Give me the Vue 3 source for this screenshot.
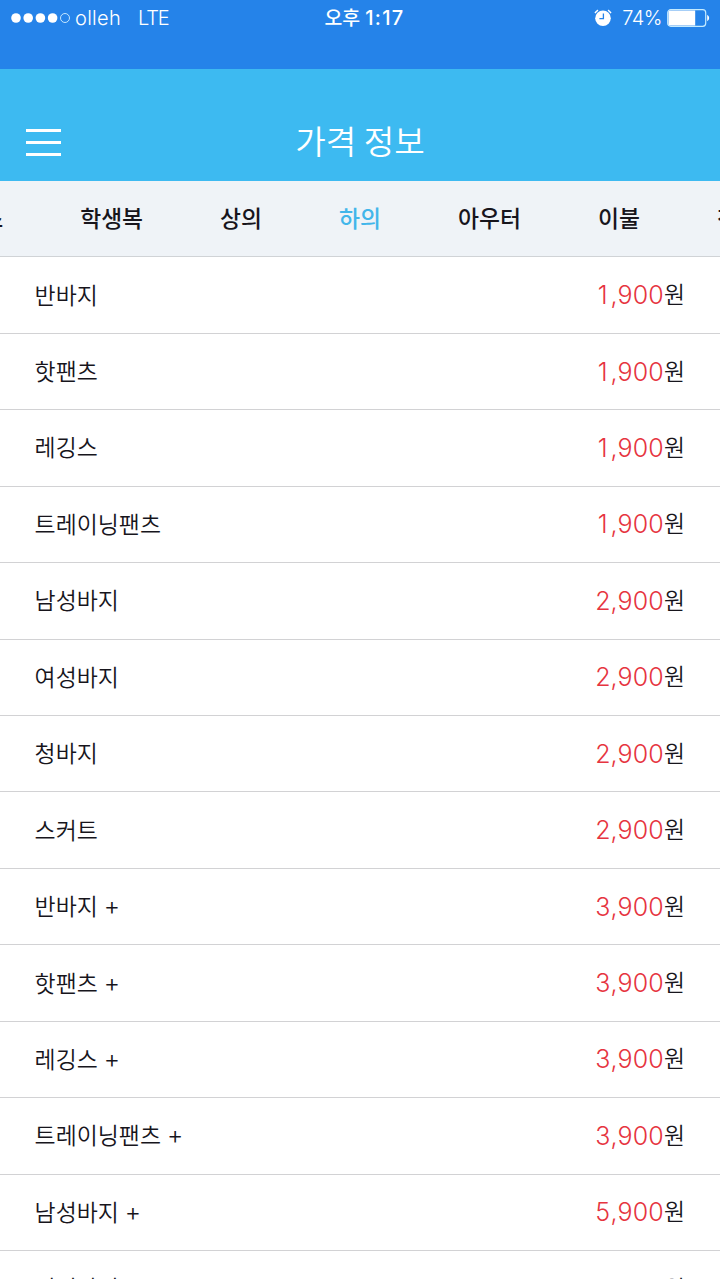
<script setup>
const tabs = ['원피스', '학생복', '상의', '하의', '아우터', '이불', '침구류']
const active = '하의'
const items = [
  ['반바지', '', '1,900'],
  ['핫팬츠', '', '1,900'],
  ['레깅스', '', '1,900'],
  ['트레이닝팬츠', '', '1,900'],
  ['남성바지', '', '2,900'],
  ['여성바지', '', '2,900'],
  ['청바지', '', '2,900'],
  ['스커트', '', '2,900'],
  ['반바지', '+', '3,900'],
  ['핫팬츠', '+', '3,900'],
  ['레깅스', '+', '3,900'],
  ['트레이닝팬츠', '+', '3,900'],
  ['남성바지', '+', '5,900'],
  ['여성바지', '+', '5,900'],
]
</script>

<template>
  <div class="screen">
    <div class="status">
      <div class="side">
        <svg class="signal" width="60" height="12" viewBox="0 0 60 12">
          <g fill="#fff">
            <circle cx="5" cy="6" r="4.8" />
            <circle cx="17.2" cy="6" r="4.8" />
            <circle cx="29.4" cy="6" r="4.8" />
            <circle cx="41.6" cy="6" r="4.8" />
          </g>
          <circle cx="54" cy="6" r="4.5" fill="none" stroke="#d5f0ff" stroke-width="0.9" />
        </svg>
        <span class="carrier">olleh</span>
        <span class="network">LTE</span>
      </div>
      <div class="time"><span class="ampm">오후</span><span class="clock">1:17</span></div>
      <div class="side right">
        <svg class="alarm" width="18" height="18" viewBox="0 0 18 18">
          <circle cx="9" cy="9.2" r="7.8" fill="#fff" />
          <path d="M1 4.2A9 9 0 0 1 4 1.1M14 1.1A9 9 0 0 1 17 4.2" fill="none" stroke="#fff" stroke-width="1.4" />
          <path d="M9.4 4.4V9.6H5.4" fill="none" stroke="#2583e9" stroke-width="1.3" />
        </svg>
        <span class="percent">74%</span>
        <svg class="battery" width="43" height="18" viewBox="0 0 43 18">
          <rect x="0.7" y="0.7" width="38" height="16.6" rx="3" fill="none" stroke="#c4ebff" stroke-width="1.2" />
          <path d="M3 1.6H28.2V16.4H3Q1.5 16.4 1.5 15V3Q1.5 1.6 3 1.6Z" fill="#fff" />
          <path d="M40.2 5.8Q42.2 7 42.2 9T40.2 12.2Z" fill="#fff" />
        </svg>
      </div>
    </div>

    <header class="bar">
      <div class="menu"><i></i><i></i><i></i></div>
      <h1>가격 정보</h1>
      <div></div>
    </header>

    <nav class="tabs">
      <span v-for="t in tabs" :key="t" :class="{ on: t === active }">{{ t }}</span>
    </nav>

    <ul class="list">
      <li v-for="item in items" :key="item[0] + item[1]">
        <span class="name">{{ item[0] }}<span v-if="item[1]" class="plus">{{ item[1] }}</span></span>
        <span class="price"><b><span class="lead">{{ item[2][0] }}</span>{{ item[2].slice(1) }}</b><span class="won">원</span></span>
      </li>
    </ul>
  </div>
</template>

<style>
body {
  overflow: hidden;
}
</style>

<style scoped>
.screen {
  width: 720px;
  height: 1279px;
  overflow: hidden;
  background: #fff;
  color: #17151c;
  font-family: Inter, "Noto Sans CJK KR", sans-serif;
}
.status {
  box-sizing: border-box;
  height: 69px;
  padding: 0 10px 33px 11px;
  display: grid;
  grid-template-columns: 1fr auto 1fr;
  align-items: center;
  background: #2583e9;
  color: #fff;
  font-size: 20px;
  font-weight: 300;
}
.side {
  display: flex;
  align-items: center;
}
.right {
  justify-content: flex-end;
}
.carrier {
  margin-left: 4px;
  letter-spacing: 0.3px;
}
.network {
  margin-left: 17px;
  letter-spacing: -1.2px;
}
.time {
  display: flex;
  align-items: baseline;
  gap: 5px;
  padding-left: 8px;
  font-weight: 500;
  white-space: nowrap;
  line-height: 24px;
}
.ampm {
  font-size: 19.4px;
}
.clock {
  font-size: 20px;
  font-weight: 500;
  letter-spacing: 1.3px;
}
.alarm {
  margin-right: -1px;
}
.percent {
  margin: 0 5px 0 11px;
  letter-spacing: -0.5px;
}
.bar {
  box-sizing: border-box;
  height: 112px;
  padding: 35px 26px 0;
  display: grid;
  grid-template-columns: 1fr auto 1fr;
  align-items: center;
  background: #3dbaf1;
  color: #fff;
}
.menu {
  display: flex;
  flex-direction: column;
  gap: 9px;
  width: 35px;
}
.menu i {
  height: 3px;
  background: #fff;
}
h1 {
  margin: 0;
  padding-bottom: 5px;
  font-family: "Noto Sans CJK KR", sans-serif;
  font-size: 33.2px;
  font-weight: 350;
  line-height: 44px;
}
.tabs {
  box-sizing: border-box;
  height: 76px;
  padding-bottom: 2px;
  display: flex;
  justify-content: center;
  align-items: center;
  gap: 77px;
  background: #eff3f7;
  border-bottom: 1px solid #d0d3d6;
  font-family: "Noto Sans CJK KR", sans-serif;
  font-size: 22.8px;
  font-weight: 500;
  white-space: nowrap;
}
.on {
  color: #42b6ea;
}
.list {
  margin: 0;
  padding: 0.4px 0 0;
  list-style: none;
}
li {
  box-sizing: border-box;
  height: 76.44px;
  padding: 0 35px 3px 34.6px;
  display: flex;
  justify-content: space-between;
  align-items: center;
  border-bottom: 1px solid #d2d2d4;
}
.name {
  font-family: "Noto Sans CJK KR", sans-serif;
  font-size: 22.9px;
  font-weight: 350;
}
.plus {
  margin-left: 6px;
  font-family: Inter, sans-serif;
  font-size: 25px;
  font-weight: 300;
  line-height: 1;
}
.price {
  display: flex;
  align-items: baseline;
}
.price b {
  position: relative;
  top: 1px;
  font-size: 25px;
  font-weight: 300;
  letter-spacing: 0.2px;
  color: #e63440;
}
.lead {
  display: inline-block;
  width: 15.2px;
  text-align: center;
}
.won {
  font-family: "Noto Sans CJK KR", sans-serif;
  font-size: 22.8px;
  font-weight: 350;
}
</style>
